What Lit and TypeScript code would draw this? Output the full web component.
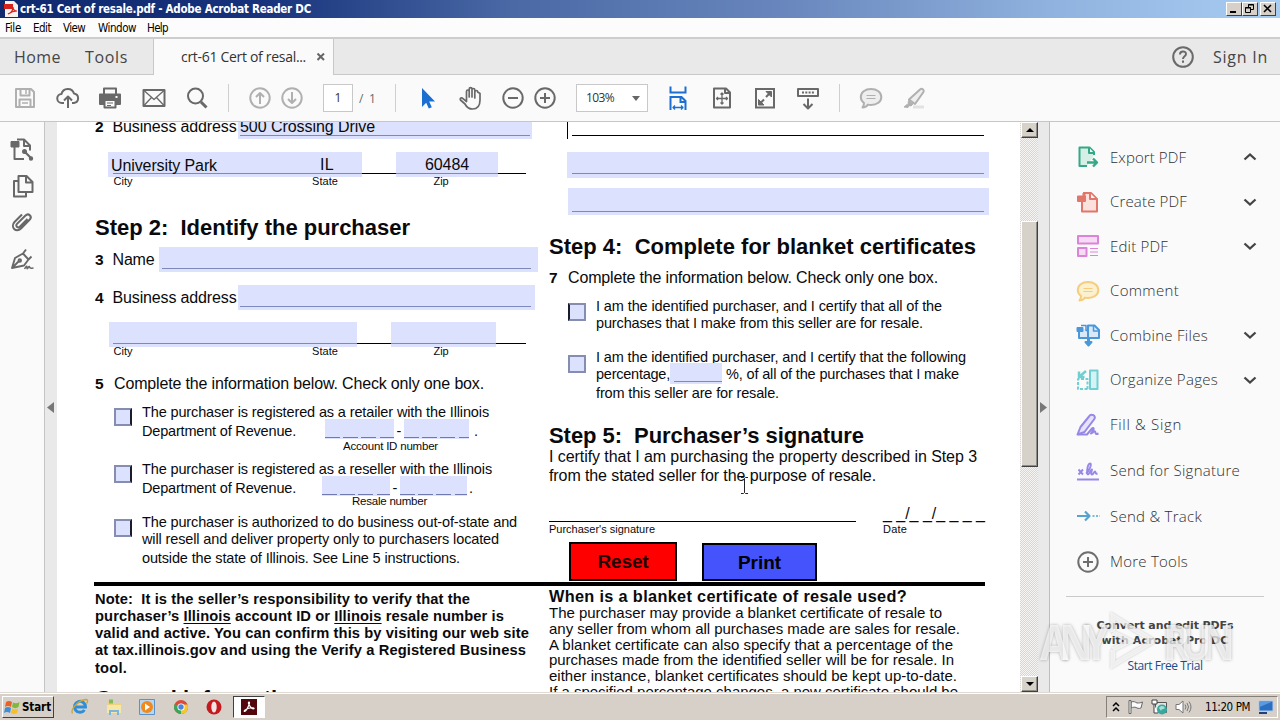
import { LitElement, css, html, svg } from 'lit';
import { customElement, property, state } from 'lit/decorators.js';

const box = (body: unknown) => html`<svg width="24" height="24" viewBox="0 0 24 24" fill="none"
    stroke="currentColor" stroke-width="2" stroke-linejoin="round">${body}</svg>`;

const icons: Record<string, unknown> = {
    save: box(svg`<path d="M3 3h15l3 3v15H3zM7.500 3v6.500h9V3M6.500 21v-7.500h11V21"/><path d="M13 4v4M9 17h6" stroke-width="1.500"/>`),
    cloud: box(svg`<path d="M8 17H6a4.500 4.500 0 0 1-.5-9 6.500 6.500 0 0 1 12.500-.5A4.800 4.800 0 0 1 18 17h-2M12 22V11M8 14.500l4-4 4 4"/>`),
    print: box(svg`<path d="M2 8.500h20V18h-4v-4H6v4H2z" fill="currentColor"/><path d="M6 8V2.500h12V8M6.500 14h11v7.500h-11z"/><path d="M9 17h6M9 19.500h4" stroke-width="1"/><path d="M17.500 11h2" stroke="#fafafa"/>`),
    mail: box(svg`<path d="M1.500 4h21v16h-21z"/><path d="M2 4.500l10 9 10-9M2 19.500l7.500-8M22 19.500l-7.500-8" stroke-width="1.300"/>`),
    search: box(svg`<circle cx="10.500" cy="10" r="7.500"/><path d="M16 16l5.500 5.500" stroke-width="3"/>`),
    up: box(svg`<circle cx="12" cy="12" r="9.700"/><path d="M12 18V7M8 11l4-4 4 4"/>`),
    down: box(svg`<circle cx="12" cy="12" r="9.700"/><path d="M12 6v11M8 13l4 4 4-4"/>`),
    pointer: box(svg`<path d="M6 2v19l4.200-4.200 2.600 5.700 3-1.300-2.600-5.700H19z" fill="currentColor" stroke="none"/>`),
    hand: box(svg`<path stroke-width="1.700" d="M8.500 15.500V5.500c0-2 2.700-2 2.700 0V11 3.200c0-2 2.800-2 2.800 0V11 4c0-2 2.800-2 2.800 0V12 6c0-2 2.900-2 2.900 0L22 7.500V14c0 5.500-2.500 9-7.500 9-4 0-6-2-7.500-5L2.500 14c-1-2 1.200-3 2.500-1.300z"/>`),
    minus: box(svg`<circle cx="12" cy="12" r="9.700"/><path d="M7 12h10"/>`),
    plus: box(svg`<circle cx="12" cy="12" r="9.700"/><path d="M7 12h10M12 7v10"/>`),
    fitWidth: box(svg`<path stroke-linejoin="miter" d="M4.500.5v6h15v-6M4.500 24V11h11l4 4v9M14.500 11v5h5"/><path stroke-width="1.300" d="M7 21.500h10M9 19.500l-2 2 2 2M15 19.500l2 2-2 2"/>`),
    fitPage: box(svg`<path d="M4 2.500h12l4 4v15H4zM15 2.500V7h5"/><path stroke-width="1.300" d="M12 7v11M6.500 12.500h11M10.500 8.500L12 7l1.500 1.500M10.500 16.500L12 18l1.500-1.500M8 11l-1.500 1.500L8 14M16 11l1.500 1.500L16 14"/>`),
    full: box(svg`<path stroke-linejoin="miter" d="M3 3h18v18.500H3z"/><path d="M13 11l5-5M11 13.500l-5 5" /><path d="M13 5.500h5.500V11zM5.500 13.500v5.500H11z" fill="currentColor" stroke-width="1"/>`),
    scroll: box(svg`<path d="M2 3h20v7H2z"/><path d="M6 6.500h12" stroke-dasharray="2 1.300"/><path d="M12 12.500V22M7.500 18l4.500 4.500 4.500-4.500"/>`),
    comment: box(svg`<path fill="var(--tint, #eee)" d="M12 3c6 0 10.300 3.300 10.300 8S18 19 12 19c-1 0-2 0-3-.4C7.500 20.500 5.500 21.500 3.500 21.500c1-1 1.500-2.500 1.500-4.500-2-1.500-3.200-3.500-3.200-6C1.800 6.300 6 3 12 3z"/><path stroke-width="1.200" d="M7.500 9.500h9M7.500 12.500h9"/>`),
    marker: box(svg`<path stroke="#e2e2e2" stroke-width="3" d="M11 21h11"/><path fill="#eee" stroke-width="2" d="M18 3.500c2-1.500 4.500 0 3.500 2.500L13 18l-6-4.500z"/><path fill="currentColor" d="M6.500 14.500l4.500 3.500-2 2-3-1zM2 21l3-2.500 2 1.500-1 1.500z" stroke-width="1"/>`),
    help: box(svg`<circle cx="12" cy="12" r="9.800"/><path d="M9 9.500c0-4 6-4 6-.5 0 2.300-3 2.200-3 5M12 15.500v2.300"/>`),
    exportPane: box(svg`<path d="M7 2.500h7l6 6v5M14 2.500V9h6M4.500 10v12H14"/><path fill="currentColor" stroke-width="1" d="M1 4.500h8V10H1z"/><path d="M14 14l7 7" stroke-width="2.200"/><circle cx="14.500" cy="14.500" r="1.500" fill="currentColor"/><circle cx="21" cy="21.500" r="1.200" fill="currentColor"/>`),
    pages: box(svg`<path d="M8.500 2h8l6 6v10h-14zM16 2v6.500h6M8 7H4v15.500h12V19"/>`),
    clip: box(svg`<path d="M17.500 9l-7.700 7.700c-2 2-4.800-.8-2.800-2.800L15.500 5.500c3-3 7 1 4.300 4L11 18.500c-5 5-11-1.500-6.500-6.500L12 4.500"/>`),
    nib: box(svg`<path stroke-width="1.900" d="M2 21L5 11l8-4.500 5.500 6-4.500 6zM2 21l7-7M13 6.500l3-4M18.500 12.500l3-3"/><circle cx="9.800" cy="13.500" r="1.200"/><path stroke-width="1.500" d="M14.500 22c2-3.500 2.500-3.500 2.500-1s2-3 2.500-1 1.500 1 4 1"/>`),
    export: box(svg`<path fill="#d5efe6" d="M18 10V7l-4.500-4.500H3.500V21H11"/><path fill="#fafafa" d="M13 2.500v5.500h5"/><path d="M11 17.500h9M17 13.500l4 4-4 4" stroke-width="2.400"/>`),
    create: box(svg`<path fill="#fbe1dc" d="M7 3h8l6 6v12.500H6V12"/><path fill="#fafafa" d="M14 3v6h6"/><path fill="currentColor" d="M2 6.500h7V11H2z"/><path d="M8 3v4" stroke-width="3"/>`),
    edit: box(svg`<path fill="#f5dcf4" d="M2 2h20v7.500H2zM2 14h8.500v8H2z"/><path stroke-width="1.200" d="M14 14.500h8M14 18h8M14 21.500h8"/>`),
    combine: box(svg`<path fill="#d9e9f8" d="M12 5v10H3V8M12 2.500h6.500L23 7v8H12z"/><path stroke-width="1.500" d="M17.500 2.500V8H23M5 2.500h5v5h2"/><path fill="currentColor" d="M1.500 5h5v3h-5z"/><path fill="currentColor" d="M12 16v3H9.500l3 3.500 3-3.500H13v-3z"/>`),
    organize: box(svg`<path fill="#d3f3f4" d="M14 2.500h7.500V21H14z"/><path stroke-dasharray="3 1.500" d="M11.500 21H2V11h9.500V21"/><path d="M3 9l7-6M3 3.500V9h5.500" stroke-width="2.500"/>`),
    fill: box(svg`<path fill="#e7e2fb" d="M13 3.500c2-3.500 8-1 5 3L8.500 19 1.500 21.500 4.500 14z"/><path d="M2 21.500h9l5-6c1.500-1.500 2.500 0 1 2l-2 3c1.500 0 3-3 4-2s-.5 3.500 3.500 2"/>`),
    send: box(svg`<path d="M1 20.500h22"/><path stroke-width="1.900" d="M2.500 10.500l4.500 5M7 10.500l-4.500 5M10 14.500c3-2 6.500-10 4-10-2.500 0-4 11-2 11 1 0 2.500-4.500 4-5-.5 2-1.500 5 0 5s2-3 3-3 0 3 2.500 2"/>`),
    track: box(svg`<path stroke-width="2.200" d="M1 12h12M9 7.500l4.500 4.500L9 16.500"/><path stroke-width="1.500" stroke-dasharray="2 1.500" d="M16.500 12H24"/>`),
};

const tools = [
    { icon: 'export', label: 'Export PDF', width: 76, color: '#35a987', arrow: 'up' },
    { icon: 'create', label: 'Create PDF', width: 77, color: '#e0776a', arrow: 'down' },
    { icon: 'edit', label: 'Edit PDF', width: 58, color: '#dc84d8', arrow: 'down' },
    { icon: 'comment', label: 'Comment', width: 69, color: '#f5cd7e', arrow: '' },
    { icon: 'combine', label: 'Combine Files', width: 98, color: '#4a97da', arrow: 'down' },
    { icon: 'organize', label: 'Organize Pages', width: 108, color: '#71cfd2', arrow: 'down' },
    { icon: 'fill', label: 'Fill & Sign', width: 72, color: '#9787e6', arrow: '' },
    { icon: 'send', label: 'Send for Signature', width: 130, color: '#9787e6', arrow: '' },
    { icon: 'track', label: 'Send & Track', width: 92, color: '#55a3cf', arrow: '' },
    { icon: 'plus', label: 'More Tools', width: 78, color: '#6e6e6e', arrow: '' },
];

/** A run of text, spaced out so that it takes the given width. */
@customElement('text-run')
export class TextRun extends LitElement {
    @property({ type: Number })
    fit = 0;

    @state()
    private spacing = 0;

    static override styles = css`
    :host {
        display: inline-block;
        white-space: pre;
    }
    `;

    override firstUpdated() {
        const span = this.renderRoot.querySelector('span');
        const count = (this.textContent || '').length;
        if (span && count && this.fit) {
            this.spacing = (this.fit - span.getBoundingClientRect().width) / count;
        }
    }

    override render() {
        return html`<span style="letter-spacing:${this.spacing}px"><slot></slot></span>`;
    }
}

@customElement('pdf-page')
export class PdfPage extends LitElement {
    static override styles = css`
    :host {
        display: block;
        overflow: hidden;
        background: #fff;
        color: #0a0a0c;
        font-family: "Liberation Sans", Arial, sans-serif;
        font-size: 16px;
    }
    .sheet {
        margin: -8px 0 0 38px;
        width: 890px;
    }
    .top, .bottom {
        display: grid;
        grid-template-columns: 454px 440px;
    }
    .top { height: 468px; }
    .col {
        display: flex;
        flex-direction: column;
    }
    text-run { display: block; }
    b { font-weight: bold; }
    h2 {
        margin: 0;
        font-size: 22px;
        line-height: 27px;
        height: 27px;
    }
    .row {
        display: flex;
        height: 25px;
        line-height: 26px;
    }
    .row b, .num b { width: 17.500px; flex: none; font-size: 15.500px; }
    .row.three { margin-top: 6px; }
    .row.four { margin-top: 13px; }
    .row .field { margin-left: auto; }
    .num {
        display: flex;
        height: 21px;
        line-height: 21px;
    }
    .num b { width: 19px; }
    .field {
        box-sizing: border-box;
        height: 25px;
        background: #dce2fd;
        padding: 20.500px 7px 0 3px;
    }
    .field::after {
        content: "";
        display: block;
        height: 1px;
        background: #7d88bd;
    }
    .wide { width: 379px; margin-right: 11px; padding-left: 3px; }
    .addr { width: 297px; margin-right: 14px; padding-right: 4px; padding-left: 2px; }
    .addr.filled { width: 294px; margin-right: 17px; padding: 0 2px 0 2px; line-height: 26px; }
    .addr.filled::after { margin-top: -5px; }
    .city {
        display: flex;
        height: 25px;
        margin: 13px 0 0 13px;
        width: 418px;
        line-height: 26px;
        background: linear-gradient(#000, #000) 5px 21px / 413px 1px no-repeat;
    }
    .city .part {
        display: flex;
        box-sizing: border-box;
        background: linear-gradient(#7d88bd, #7d88bd) 0 21px / 100% 1px no-repeat #dce2fd;
    }
    .part.a { width: 254px; padding-left: 3px; background-position: 5px 21px; }
    .part.a text-run:first-child { line-height: 28px; }
    .part.b { width: 102px; margin-left: 34px; padding-left: 29px; }
    .part.c { width: 248px; margin-left: 1px; background-position: 4px 21px; }
    .part.d { width: 105px; margin-left: 34px; }
    .city .state { margin-left: 103px; }
    .city.blank { margin-top: 12px; }
    .caps {
        display: grid;
        grid-template-columns: 198.500px 121.500px 60px;
        margin: -1px 0 0 18.500px;
        height: 11px;
        font-size: 11px;
        line-height: 10px;
    }
    h2.s2 { margin-top: 27px; }
    .num.five { margin-top: 16px; }
    .opt {
        display: grid;
        grid-template-columns: 18px auto;
        column-gap: 10px;
        margin-left: 19px;
        font-size: 14.500px;
        line-height: 19px;
        align-content: start;
    }
    .check {
        box-sizing: border-box;
        width: 18px;
        height: 18px;
        margin-top: 5px;
        border: 2px solid #858db0;
        border-right-color: #1b1c2b;
        background: #dce2fd;
    }
    .o1 { margin-top: 9px; height: 57px; }
    .o2 { height: 54px; }
    .o3 { line-height: 17.300px; }
    .o3 .last { line-height: 19px; }
    .ids { display: flex; height: 19px; }
    .id {
        height: 20px;
        margin-top: -3px;
        background: repeating-linear-gradient(90deg, #707ab0 0 14.700px, transparent 14.700px 18.200px) 0 18px / 100% 1px no-repeat #dce2fd;
    }
    .dash { width: 10px; text-align: center; }
    .id1 { width: 69px; margin-left: 29px; }
    .id2 { width: 65px; margin-right: 5px; }
    .id3 { width: 68px; margin-left: 26px; }
    .id4 { width: 67px; margin-right: 2px; }
    .small { font-size: 11.500px; line-height: 11px; }
    .small.acc { margin-left: 201px; }
    .small.res { margin: -2px 0 0 210px; }
    .rule { height: 4px; background: #000; margin-left: -1px; }

    .blank1, .blank2, .blank3 { margin-left: 18px; }
    .blank1 {
        box-sizing: border-box;
        height: 25px;
        width: 422px;
        padding: 21px 5px 0 4px;
        border-left: 1px solid #000;
    }
    .blank1 i { display: block; height: 1px; background: #000; }
    .blank2 { width: 422px; height: 26px; margin-top: 13px; padding: 21px 5px 0 5px; }
    .blank3 { width: 421px; height: 27px; margin: 10px 0 0 19px; padding: 23px 5px 0 4px; }
    h2.s4 { margin-top: 18px; }
    .num.seven { margin-top: 7px; }
    .o6 { margin-top: 10px; line-height: 17px; height: 51px; }
    .o7 { line-height: 17px; height: 73px; }
    .o7 .check { margin-top: 6px; }
    .o6 .check, .o7 .check { border-right-color: #858db0; }
    .o6 .check { border-left-color: #1b1c2b; }
    .pct { display: flex; height: 17px; }
    .pct .gap {
        width: 52px;
        height: 21px;
        margin: -3px 4px 0 0;
        background: linear-gradient(#7d88bd, #7d88bd) 4px 18px / 48px 1px no-repeat #dce2fd;
    }
    .o7 .last { line-height: 20px; }
    .certify { line-height: 19px; margin-top: -2px; }
    .certify + .certify { margin-top: 0; }
    .sign { display: flex; margin-top: 19px; height: 18px; }
    .sign .line { width: 307px; border-bottom: 1px solid #000; margin-right: 27px; height: 17px; }
    .sign text-run { line-height: 20px; }
    .signcaps { display: flex; font-size: 11px; line-height: 15px; }
    .signcaps text-run:first-child { width: 334px; }
    .buttons { display: flex; margin: 5px 0 0 20px; gap: 25px; align-items: end; }
    button {
        box-sizing: border-box;
        height: 39px;
        width: 108px;
        padding: 1px 0 0;
        border: 2px solid #000;
        border-radius: 0;
        background: #f00;
        font: bold 19px "Liberation Sans", Arial, sans-serif;
    }
    button text-run { display: inline-block; color: #200; }
    button.print { width: 115px; height: 38px; background: #4453fc; }
    button.print text-run { color: #000; }
    .note {
        margin-top: 4.500px;
        font-weight: bold;
        font-size: 14.700px;
        line-height: 17.300px;
    }
    .note u { text-decoration-thickness: 1px; text-underline-offset: 2px; }
    .bottom h2 { margin-top: 8px; }
    .when { font-size: 15px; line-height: 15.800px; }
    .when h3 { margin: 2px 0 0; font-size: 16.300px; line-height: 17px; }
    `;

    override render() {
        return html`<div class="sheet">
    <div class="top">
      <div class="col">
        <div class="row"><b>2</b><text-run fit="124">Business address</text-run>
          <div class="field addr filled"><text-run fit="135">500 Crossing Drive</text-run></div></div>
        <div class="city">
          <div class="part a"><text-run fit="106">University Park</text-run><text-run class="state" fit="14">IL</text-run></div>
          <div class="part b"><text-run fit="44">60484</text-run></div>
        </div>
        <div class="caps"><text-run fit="19">City</text-run><text-run fit="26">State</text-run><text-run fit="15">Zip</text-run></div>
        <h2 class="s2"><text-run fit="315">Step 2:  Identify the purchaser</text-run></h2>
        <div class="row three"><b>3</b><text-run fit="42">Name</text-run><div class="field wide"></div></div>
        <div class="row four"><b>4</b><text-run fit="124">Business address</text-run><div class="field addr"></div></div>
        <div class="city blank"><div class="part c"></div><div class="part d"></div></div>
        <div class="caps"><text-run fit="19">City</text-run><text-run fit="26">State</text-run><text-run fit="15">Zip</text-run></div>
        <div class="num five"><b>5</b><text-run fit="370">Complete the information below. Check only one box.</text-run></div>
        <div class="opt o1">
          <div class="check"></div>
          <div>
            <text-run fit="347">The purchaser is registered as a retailer with the Illinois</text-run>
            <div class="ids"><text-run fit="154">Department of Revenue.</text-run><div class="id id1"></div><div class="dash">-</div><div class="id id2"></div>.</div>
            <text-run class="small acc" fit="95">Account ID number</text-run>
          </div>
        </div>
        <div class="opt o2">
          <div class="check"></div>
          <div>
            <text-run fit="350">The purchaser is registered as a reseller with the Illinois</text-run>
            <div class="ids"><text-run fit="154">Department of Revenue.</text-run><div class="id id3"></div><div class="dash">-</div><div class="id id4"></div>.</div>
            <text-run class="small res" fit="75">Resale number</text-run>
          </div>
        </div>
        <div class="opt o3">
          <div class="check"></div>
          <div>
            <text-run fit="375">The purchaser is authorized to do business out-of-state and</text-run>
            <text-run fit="357">will resell and deliver property only to purchasers located</text-run>
            <text-run class="last" fit="318">outside the state of Illinois. See Line 5 instructions.</text-run>
          </div>
        </div>
      </div>
      <div class="col">
        <div class="blank1"><i></i></div>
        <div class="field blank2"></div>
        <div class="field blank3"></div>
        <h2 class="s4"><text-run fit="427">Step 4:  Complete for blanket certificates</text-run></h2>
        <div class="num seven"><b>7</b><text-run fit="370">Complete the information below. Check only one box.</text-run></div>
        <div class="opt o6">
          <div class="check"></div>
          <div>
            <text-run fit="346">I am the identified purchaser, and I certify that all of the</text-run>
            <text-run fit="327">purchases that I make from this seller are for resale.</text-run>
          </div>
        </div>
        <div class="opt o7">
          <div class="check"></div>
          <div>
            <text-run fit="370">I am the identified purchaser, and I certify that the following</text-run>
            <div class="pct"><text-run fit="74">percentage,</text-run><div class="gap"></div><text-run fit="233">%, of all of the purchases that I make</text-run></div>
            <text-run class="last" fit="183">from this seller are for resale.</text-run>
          </div>
        </div>
        <h2><text-run fit="315">Step 5:  Purchaser’s signature</text-run></h2>
        <text-run class="certify" fit="428">I certify that I am purchasing the property described in Step 3</text-run>
        <text-run class="certify" fit="327">from the stated seller for the purpose of resale.</text-run>
        <div class="sign"><div class="line"></div><text-run fit="102">_ _/_ _/_ _ _ _</text-run></div>
        <div class="signcaps"><text-run fit="106">Purchaser's signature</text-run><text-run fit="24">Date</text-run></div>
        <div class="buttons">
          <button><text-run fit="51">Reset</text-run></button>
          <button class="print"><text-run fit="43">Print</text-run></button>
        </div>
      </div>
    </div>
    <div class="rule"></div>
    <div class="bottom">
      <div class="col">
        <div class="note">
          <text-run fit="375">Note:  It is the seller’s responsibility to verify that the</text-run>
          <text-run fit="409">purchaser’s <u>Illinois</u> account ID or <u>Illinois</u> resale number is</text-run>
          <text-run fit="434">valid and active. You can confirm this by visiting our web site</text-run>
          <text-run fit="431">at tax.illinois.gov and using the Verify a Registered Business</text-run>
          <text-run fit="32">tool.</text-run>
        </div>
        <h2><text-run fit="209">General information</text-run></h2>
      </div>
      <div class="when">
        <h3><text-run fit="358">When is a blanket certificate of resale used?</text-run></h3>
        <text-run fit="393">The purchaser may provide a blanket certificate of resale to</text-run>
        <text-run fit="411">any seller from whom all purchases made are sales for resale.</text-run>
        <text-run fit="404">A blanket certificate can also specify that a percentage of the</text-run>
        <text-run fit="405">purchases made from the identified seller will be for resale. In</text-run>
        <text-run fit="408">either instance, blanket certificates should be kept up-to-date.</text-run>
        <text-run fit="409">If a specified percentage changes, a new certificate should be</text-run>
      </div>
    </div>
    </div>`;
    }
}

@customElement('app-root')
export class AppRoot extends LitElement {
    static override styles = css`
    :host {
        display: flex;
        flex-direction: column;
        position: relative;
        width: 1280px;
        height: 720px;
        overflow: hidden;
        background: #fafafa;
        color: #454545;
        font-family: "Open Sans", "Noto Sans", sans-serif;
        cursor: default;
    }
    :host > div { flex: none; }
    svg { display: block; flex: none; }
    .title {
        display: flex;
        align-items: center;
        box-sizing: border-box;
        height: 18px;
        padding: 0 4px 0 4px;
        background: linear-gradient(90deg, #10296f 0, #16327b 20%, #4a69a5 40%, #6a88be 62%, #8fb2de 82%, #a8cdf3 100%);
        color: #fff;
        font: bold 11.500px/18px "DejaVu Sans Condensed", "DejaVu Sans", sans-serif;
        font-stretch: condensed;
    }
    .title text-run { margin: 0 auto 0 2px; }
    .wbtn {
        box-sizing: border-box;
        width: 16px;
        height: 14px;
        background: #d6d0c8;
        border: 1px solid;
        border-color: #fff #404040 #404040 #fff;
    }
    .wbtn.last { margin-left: 2px; }
    .menu {
        box-sizing: border-box;
        display: flex;
        height: 21px;
        padding-left: 5px;
        background: #fdfcfc;
        border-bottom: 2px solid #cdcdcd;
        color: #000;
        font: 11.500px/20px "DejaVu Sans Condensed", "DejaVu Sans", sans-serif;
        font-stretch: condensed;
    }
    .menu text-run:nth-child(1) { width: 28px; }
    .menu text-run:nth-child(2) { width: 30px; }
    .menu text-run:nth-child(3) { width: 35px; }
    .menu text-run:nth-child(4) { width: 49px; }
    .tabs {
        display: flex;
        height: 36px;
        font-size: 16px;
        line-height: 36px;
    }
    .tabs > div {
        box-sizing: border-box;
        display: flex;
        align-items: center;
        background: #e9e9e9;
        border-bottom: 1px solid #c8c8c8;
    }
    .tabs .home { width: 154px; padding-left: 14px; gap: 24px; border-right: 1px solid #c8c8c8; }
    .tabs .open { width: 179px; background: #fafafa; border: 0; padding-left: 27px; gap: 11px; font-size: 14px; color: #333; }
    .tabs .rest { flex: 1; border-left: 1px solid #c8c8c8; justify-content: end; gap: 18px; padding-right: 12px; }
    .rest svg { color: #6a6a6a; }
    .toolbar {
        box-sizing: border-box;
        display: grid;
        grid-template-columns: 43px 42px 44px 42.500px 43.500px 20px 32px 43px 36px 36px 21px 42px 43px 32px 43px 90px 44px 43px 43px 43px 20px 43px 24px;
        align-items: center;
        height: 47px;
        padding-left: 13px;
        border-bottom: 1px solid #c4c8c4;
        color: #696969;
        font-size: 12px;
    }
    .toolbar .off { color: #b0b0b0; }
    .toolbar .on { color: #1a6fd0; }
    .toolbar i { width: 1px; height: 28px; background: #cfcfcf; }
    .entry {
        box-sizing: border-box;
        width: 30px;
        height: 28px;
        background: #fff;
        border: 1px solid #c8c8c8;
        line-height: 26px;
        text-align: center;
        color: #333;
    }
    .entry.zoom { display: flex; align-items: center; width: 72px; padding: 0 7px 0 9px; justify-content: space-between; }
    .main {
        display: flex;
        height: 570px;
        background: #e9e9e9;
    }
    .rail {
        box-sizing: border-box;
        width: 45px;
        padding: 15px 0 0 10px;
        display: flex;
        flex-direction: column;
        gap: 12.700px;
        background: #fafafa;
        border-right: 1px solid #c4c4c4;
        color: #686868;
    }
    .fold { display: flex; align-items: center; width: 12px; }
    .fold svg { margin-left: 2px; }
    .fold.right { width: 11px; border-right: 1px solid #bdbdbd; }
    .fold.right svg { margin-left: 2px; }
    pdf-page { width: 963px; }
    .bar {
        width: 17px;
        padding-left: 1px;
        display: flex;
        flex-direction: column;
        background: repeating-conic-gradient(#d9d5cf 0 25%, #f6f5f3 0 50%) 0 0 / 2px 2px;
    }
    .bar > div {
        box-sizing: border-box;
        background: #d6d1c9;
        border: 1px solid;
        border-color: #fff #404040 #404040 #fff;
        box-shadow: inset -1px -1px #908c86;
    }
    .bar .step { height: 16px; }
    .bar .thumb { height: 246px; margin: 83px 0 auto; }
    .side {
        flex: 1;
        background: #fafafa;
        padding: 13px 16px 0;
        font-weight: 300;
        font-size: 15px;
    }
    .tool {
        display: flex;
        align-items: center;
        height: 44.500px;
        padding: 0 7px 0 10px;
    }
    .tool:nth-child(n + 7) { height: 45.700px; }
    .tool text-run { margin: -1px auto 0 10px; color: #303030; }
    .tool .glyph { --tint: #fdf0cf; }
    .promo {
        margin-top: 11px;
        padding-top: 21px;
        border-top: 1px solid #c9c9c9;
        display: flex;
        flex-direction: column;
        align-items: center;
        font: bold 11px/15px "DejaVu Sans", sans-serif;
    }
    .promo .link {
        margin-top: 10px;
        color: #164e8c;
        font: 12px/15px "Open Sans", sans-serif;
    }
    .task {
        box-sizing: border-box;
        display: flex;
        align-items: center;
        height: 28px;
        padding: 1px 2px 0;
        border-top: 1px solid #dedad3;
        box-shadow: inset 0 1px #fff;
        background: #d6d0c8;
        color: #000;
    }
    .start {
        box-sizing: border-box;
        display: flex;
        align-items: center;
        gap: 1px;
        width: 52px;
        height: 22px;
        padding-left: 1px;
        border: 1px solid;
        border-color: #fff #404040 #404040 #fff;
        font: bold 11.500px "DejaVu Sans Condensed", "DejaVu Sans", sans-serif;
        font-stretch: condensed;
    }
    .quick { display: flex; gap: 15.500px; margin-left: 17px; }
    .active {
        box-sizing: border-box;
        width: 32px;
        height: 22px;
        margin-left: 10px;
        padding: 2px 0 0 7px;
        background: #fff;
        border: 1px solid;
        border-color: #404040 #fff #fff #404040;
    }
    .tray {
        box-sizing: border-box;
        display: flex;
        align-items: center;
        width: 172px;
        height: 22px;
        margin-left: auto;
        padding-left: 5px;
        border: 1px solid;
        border-color: #857f77 #fff #fff #857f77;
        font: 11.500px "DejaVu Sans Condensed", "DejaVu Sans", sans-serif;
        font-stretch: condensed;
    }
    .tray .flag { margin-left: 8px; }
    .tray .net { margin-left: 7px; }
    .tray .vol { margin-left: 7px; }
    .tray text-run { margin: 0 8px 0 13px; }
    .cursor { position: absolute; left: 740px; top: 477px; }
    .mark {
        position: absolute;
        left: 1040px;
        top: 609px;
        display: flex;
        align-items: center;
        font: bold 41px/64px "Open Sans", sans-serif;
        color: rgba(255, 255, 255, .7);
        text-shadow: 0 0 3px rgba(0, 0, 0, .3);
    }
    .mark text-run { transform: scaleY(1.2); }
    .mark svg { margin: 0 5px 0 8px; filter: drop-shadow(0 0 1px rgba(0, 0, 0, .3)); }
    `;

    private chevron(dir: string) {
        return html`<svg width="14" height="14" viewBox="0 0 14 14" fill="none" stroke="#444" stroke-width="2.300"
        ><path d="${dir === 'up' ? 'M1.500 9.500L7 4.500l5.500 5' : 'M1.500 4.500L7 9.500l5.500-5'}"/></svg>`;
    }

    private renderToolbar() {
        return html`<div class="toolbar">
      <span class="off">${icons.save}</span>${icons.cloud}${icons.print}${icons.mail}${icons.search}<i></i>
      <span class="off">${icons.up}</span><span class="off">${icons.down}</span>
      <div class="entry">1</div><text-run fit="18">/ 1</text-run><i></i>
      <span class="on">${icons.pointer}</span>${icons.hand}${icons.minus}${icons.plus}
      <div class="entry zoom"><text-run fit="28">103%</text-run>
        <svg width="8" height="5"><path d="M0 0h8L4 5z" fill="#666"/></svg></div>
      <span class="on">${icons.fitWidth}</span>${icons.fitPage}${icons.full}${icons.scroll}<i></i>
      <span class="off">${icons.comment}</span><span class="off">${icons.marker}</span>
    </div>`;
    }

    private renderTaskbar() {
        return html`<div class="task">
      <div class="start">
        <svg width="17" height="16" viewBox="0 0 17 16"><path d="M2 3c2-1.500 4-1.500 6 0L7 8C5 6.500 3 6.500 1 8z" fill="#e8622c"/><path d="M9 3.500c2 1 4 1 6.500-.5l-1 5c-2 1.500-4.500 1.500-6.500 0z" fill="#7fb83a"/><path d="M1 9c2-1.500 4-1.500 6 0l-1 5c-2-1.500-4-1.500-6 0z" fill="#3f8fd8"/><path d="M8 9.500c2 1 4 1 6 0l-1 4.500c-2 1.300-4 1.300-6 0z" fill="#f5c02e"/></svg>
        <text-run fit="29">Start</text-run>
      </div>
      <div class="quick">
        <svg width="18" height="18" viewBox="0 0 18 18"><path d="M13.500 12A5.500 5.500 0 1 1 14.500 9H5" fill="none" stroke="#2e8fd8" stroke-width="3"/><path d="M1.500 15.500C-1 11 8 2 15 1.500c3 0 1 3.500.5 4" fill="none" stroke="#c9a53c" stroke-width="1.300"/></svg>
        <svg width="18" height="18" viewBox="0 0 18 18"><path d="M2 3h5l1 2h8v9H2z" fill="#efd27c"/><path d="M4 1.500h4v4H4z" fill="#86b95a"/><path d="M2 7h14v8H2z" fill="#f7e7a6"/><path d="M4 17v-5h10v5h-2v-3H6v3z" fill="#7db6dd"/></svg>
        <svg width="18" height="18" viewBox="0 0 18 18"><path d="M1.500 1.500h15v15h-15z" fill="#b9d6f0" stroke="#5b93c8"/><circle cx="9" cy="9" r="6" fill="#f08a1c"/><path d="M7 5.500l5 3.500-5 3.500z" fill="#fff"/></svg>
        <svg width="18" height="18" viewBox="0 0 18 18"><circle cx="9" cy="9" r="7" fill="#dc4a3d"/><path d="M2.700 6A7 7 0 0 0 9 16l3-5.500-3-1.500z" fill="#3aa757"/><path d="M9 16a7 7 0 0 0 6.500-9.500H9z" fill="#f5c832"/><circle cx="9" cy="9" r="3.600" fill="#fff"/><circle cx="9" cy="9" r="2.700" fill="#4a86e0"/></svg>
        <svg width="18" height="18" viewBox="0 0 18 18"><circle cx="9" cy="9" r="7.500" fill="#c41a1f"/><ellipse cx="9" cy="9" rx="2.700" ry="5.500" fill="#f2e4e2"/></svg>
      </div>
      <div class="active"><svg width="16" height="16" viewBox="0 0 16 16"><path d="M0 0h16v16H0z" fill="#54060d"/><path d="M8 3c-1.500 0 0 4 3 6.500 2 1 3-.5 1-.7C9 8.500 5 10 3.500 11.500 2.500 13 4.500 13 6 10S9.500 3 8 3z" fill="none" stroke="#fff" stroke-width="1.200"/></svg></div>
      <div class="tray">
        <svg width="8" height="12" viewBox="0 0 8 12" fill="none" stroke="#000" stroke-width="1.500"><path d="M1 5l3-3 3 3M1 10l3-3 3 3"/></svg>
        <svg class="flag" width="16" height="16" viewBox="0 0 16 16" fill="#fbfbfb" stroke="#666"><path d="M3 3c3-1 4 0 6 1 2 0 3 0 5.500-1l-1.500 6c-2 1-4 0-5-.5S5 8 3 9z"/><path d="M1 1.500h2v13H1z"/></svg>
        <svg class="net" width="17" height="17" viewBox="0 0 17 17"><path d="M4.500 3.500h11v10h-11z" fill="#dfe6e4" stroke="#555"/><path d="M1 1h5v4H1zM3 5v9h4" fill="#fff" stroke="#444"/><circle cx="11" cy="10.500" r="5" fill="#37a7a0"/><path d="M8 9c2-3 5-2 6 0-2 2-3 0-4 3z" fill="#a8ded0"/></svg>
        <svg class="vol" width="17" height="16" viewBox="0 0 17 16" fill="#fff" stroke="#777"><path d="M1 5.500h3L8 2v12l-4-3.500H1z"/><path d="M10 5.500q2 2.500 0 5M12 4q3 4 0 8M14 2.500q4 5.500 0 11" fill="none"/></svg>
        <text-run fit="45">11:20 PM</text-run>
        <svg width="16" height="14" viewBox="0 0 16 14"><path d="M1 1h14v10H1z" fill="#2c6fc0" stroke="#aecbe8"/><path d="M1.500 1.500h13L1.500 7z" fill="#5a9be0"/><path d="M1 13h8" stroke="#1e4277" stroke-width="2"/></svg>
      </div>
    </div>`;
    }

    override render() {
        return html`
    <div class="title">
      <svg width="14" height="16" viewBox="0 0 14 16"><path d="M1 0h9l4 4v12H1z" fill="#f6f2f0"/><path d="M0 3h9v5H0z" fill="#d6221a"/><path d="M4 13c3-1 5-4 5-7 0 3 2 4 4 4-3 0-6 1-9 3z" fill="none" stroke="#d6221a" stroke-width="1.200"/></svg>
      <text-run fit="291">crt-61 Cert of resale.pdf - Adobe Acrobat Reader DC</text-run>
      <div class="wbtn"><svg width="14" height="12"><path d="M3 8h6v2H3z"/></svg></div>
      <div class="wbtn"><svg width="14" height="12" fill="none" stroke="#000"><path d="M5.500 4V1.500h5v5H8M5 2h6M2.500 4.500h5v5h-5zM2 5h6"/></svg></div>
      <div class="wbtn last"><svg width="14" height="12" stroke="#000" stroke-width="1.600"><path d="M3 2l7 7M10 2L3 9"/></svg></div>
    </div>
    <div class="menu"><text-run fit="16">File</text-run><text-run fit="18">Edit</text-run><text-run fit="22">View</text-run><text-run fit="38">Window</text-run><text-run fit="21">Help</text-run></div>
    <div class="tabs">
      <div class="home"><text-run fit="47">Home</text-run><text-run fit="43">Tools</text-run></div>
      <div class="open"><text-run fit="125">crt-61 Cert of resal...</text-run>
        <svg width="8" height="8" stroke="#666" stroke-width="2"><path d="M.5.5l6.500 6.500M7 .5L.5 7"/></svg></div>
      <div class="rest">${icons.help}<text-run fit="55">Sign In</text-run></div>
    </div>
    ${this.renderToolbar()}
    <div class="main">
      <div class="rail">${icons.exportPane}${icons.pages}${icons.clip}${icons.nib}</div>
      <div class="fold"><svg width="7" height="11"><path d="M7 0v11L0 5.500z" fill="#777"/></svg></div>
      <pdf-page></pdf-page>
      <div class="bar">
        <div class="step"><svg width="15" height="14"><path d="M4 9h8L8 5z"/></svg></div>
        <div class="thumb"></div>
        <div class="step"><svg width="15" height="14"><path d="M4 5h8L8 9z"/></svg></div>
      </div>
      <div class="fold right"><svg width="7" height="11"><path d="M0 0v11l7-5.500z" fill="#777"/></svg></div>
      <div class="side">
        ${tools.map((t) => html`<div class="tool">
          <span class="glyph" style="color:${t.color}">${icons[t.icon]}</span>
          <text-run fit="${t.width}">${t.label}</text-run>
          ${t.arrow ? this.chevron(t.arrow) : ''}
        </div>`)}
        <div class="promo">
          <text-run fit="137">Convert and edit PDFs</text-run>
          <text-run fit="127">with Acrobat Pro DC</text-run>
          <text-run class="link" fit="75">Start Free Trial</text-run>
        </div>
      </div>
    </div>
    ${this.renderTaskbar()}
    <svg class="cursor" width="9" height="17" viewBox="0 0 9 17" fill="none" stroke="#222"><path d="M1 .5h2.500l1 1 1-1H8M4.500 1.500v14M1 16.500h2.500l1-1 1 1H8"/></svg>
    <div class="mark"><text-run fit="60">ANY</text-run>
      <svg width="50" height="62" viewBox="0 0 52 62" fill="none" stroke="rgba(255,255,255,.7)" stroke-width="5"><path d="M5 22V5l42 26L5 56V40M5 22l18 9-18 9"/></svg>
      <text-run fit="62">RUN</text-run></div>`;
    }
}
